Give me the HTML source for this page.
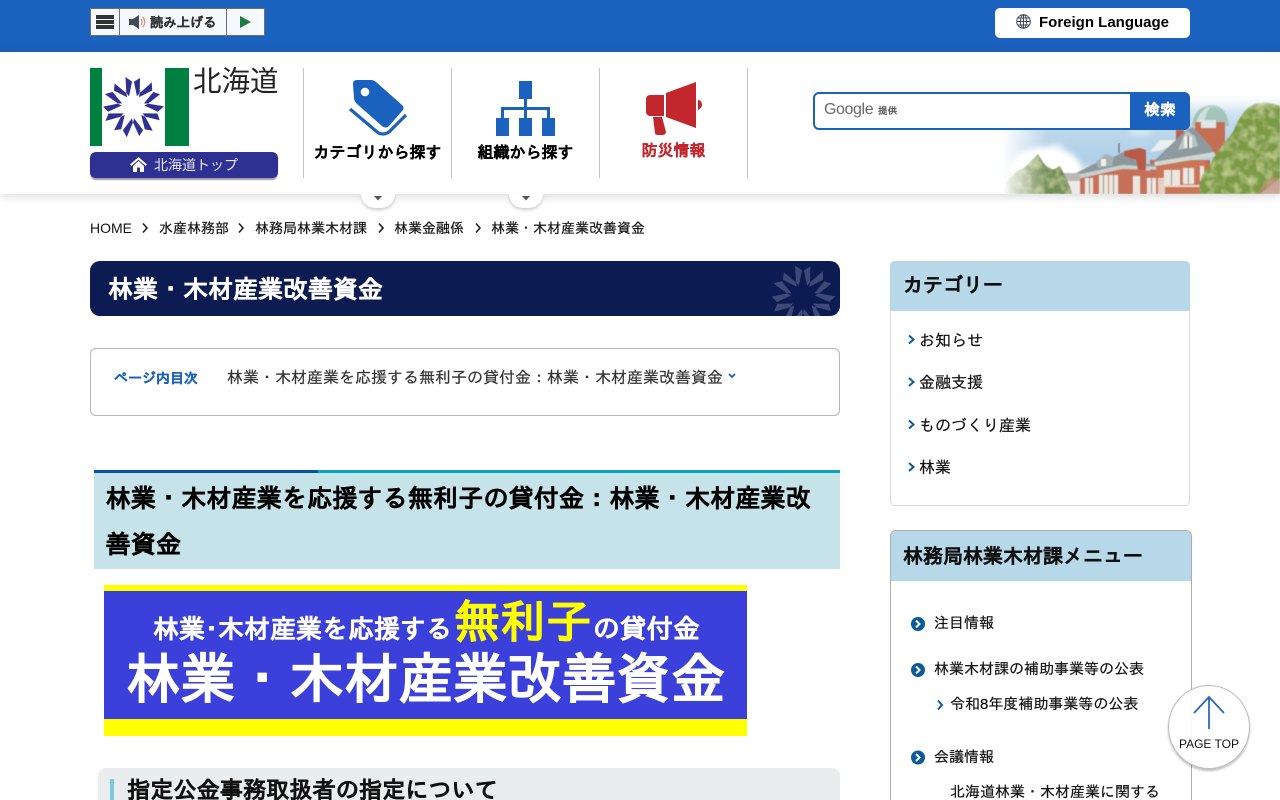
<!DOCTYPE html>
<html lang="ja">
<head>
<meta charset="utf-8">
<title>林業・木材産業改善資金</title>
<style>
html,body{margin:0;padding:0;width:1280px;height:800px;overflow:hidden;background:#fff}
body{position:relative;font-family:"Liberation Sans","IPAGothic",sans-serif;color:#111}
.a{position:absolute;white-space:nowrap}
.i{-webkit-text-stroke:.2px currentColor}
.n{font-family:"Liberation Sans","Noto Sans CJK JP",sans-serif}
svg{position:absolute;overflow:visible}
</style>
</head>
<body>
<svg width="0" height="0" style="left:0;top:0">
<defs>
<g id="arm"><path d="M-7.500,-30 L-.5,-25 L.5,-25 L7,-29 L6.700,-14 L0,-6 L-6.700,-14Z"/></g>
<g id="star"><use href="#arm" transform="rotate(0)"/><use href="#arm" transform="rotate(51.43)"/><use href="#arm" transform="rotate(102.86)"/><use href="#arm" transform="rotate(154.29)"/><use href="#arm" transform="rotate(205.71)"/><use href="#arm" transform="rotate(257.14)"/><use href="#arm" transform="rotate(308.57)"/></g>
<g id="tip"><path d="M-4.300,-9 L-1,-25 L-.3,-31 L.3,-31 L1,-25 L4.300,-9Z"/></g>
<g id="wstar"><use href="#tip" transform="rotate(0)"/><use href="#tip" transform="rotate(51.43)"/><use href="#tip" transform="rotate(102.86)"/><use href="#tip" transform="rotate(154.29)"/><use href="#tip" transform="rotate(205.71)"/><use href="#tip" transform="rotate(257.14)"/><use href="#tip" transform="rotate(308.57)"/><circle r="10"/></g>
<linearGradient id="sky" x1="0" y1="0" x2="0" y2="1"><stop offset="0" stop-color="#f4f8fb"/><stop offset=".3" stop-color="#bfd9ec"/><stop offset=".65" stop-color="#afd0e8"/><stop offset="1" stop-color="#e4eef5"/></linearGradient>
<linearGradient id="fade" x1="0" y1="0" x2="1" y2="0"><stop offset="0" stop-color="#fff"/><stop offset=".04" stop-color="#fff"/><stop offset=".2" stop-color="#fff" stop-opacity="0"/></linearGradient>
<linearGradient id="fade2" x1="0" y1="0" x2="0" y2="1"><stop offset="0" stop-color="#fff"/><stop offset=".16" stop-color="#fff" stop-opacity="0"/></linearGradient>
<filter id="leaf" x="0" y="0" width="100%" height="100%"><feTurbulence type="fractalNoise" baseFrequency=".12" numOctaves="2" seed="4"/><feColorMatrix values="0 0 0 0 .68  0 0 0 0 .74  0 0 0 0 .36  1.500 0 0 0 -.6"/><feComposite in2="SourceAlpha" operator="in" result="n"/><feMerge><feMergeNode in="SourceGraphic"/><feMergeNode in="n"/></feMerge></filter>
<filter id="soft"><feGaussianBlur stdDeviation=".5"/></filter>
<filter id="cl"><feGaussianBlur stdDeviation="3"/></filter>
</defs>
</svg>

<!-- top bar -->
<div class="a" style="left:0;top:0;width:1280px;height:52px;background:#1b61be"></div>
<div class="a" style="left:90px;top:8px;width:173px;height:26px;background:#f5f8fc;border:1px solid #6a6f78"></div>
<div class="a" style="left:119px;top:9px;width:1px;height:26px;background:#6a6f78"></div>
<div class="a" style="left:226px;top:9px;width:1px;height:26px;background:#6a6f78"></div>
<div class="a" style="left:96px;top:15px;width:18px;height:4px;background:#333"></div>
<div class="a" style="left:96px;top:20px;width:18px;height:4px;background:#333"></div>
<div class="a" style="left:96px;top:25px;width:18px;height:4px;background:#333"></div>
<svg style="left:129px;top:14px" width="20" height="16" viewBox="0 0 20 16"><path d="M0,5H4L10,1V15L4,11H0Z" fill="#444a58"/><path d="M12,5Q14,8 12,11M14,3Q17.500,8 14,13" fill="none" stroke="#ef8a5a" stroke-width="1.200"/></svg>
<div class="a i" style="left:150px;top:13px;line-height:20px;font-size:13.300px;font-weight:700;color:#333">読み上げる</div>
<svg style="left:240px;top:16px" width="13" height="13"><path d="M0,0L11,6L0,12Z" fill="#1e7d3c"/></svg>

<div class="a" style="left:995px;top:8px;width:195px;height:30px;background:#fff;border-radius:5px"></div>
<svg style="left:1016px;top:14px" width="15" height="15" viewBox="0 0 15 15" fill="none" stroke="#3f4a58" stroke-width="1"><circle cx="7.500" cy="7.500" r="6.800"/><ellipse cx="7.500" cy="7.500" rx="3" ry="6.800"/><path d="M.7,7.500H14.300M1.600,4H13.400M1.600,11H13.400M7.500,.7V14.300"/></svg>
<div class="a" style="left:1039px;top:14px;line-height:18px;font-size:15px;font-weight:700;color:#000">Foreign Language</div>

<!-- header -->
<div class="a" style="left:0;top:52px;width:1280px;height:142px;background:#fff;box-shadow:0 2px 10px rgba(0,0,0,.16)"></div>

<!-- photo -->
<svg style="left:990px;top:94px" width="290" height="100" viewBox="0 0 290 100">
<clipPath id="pc"><rect width="290" height="100"/></clipPath>
<g clip-path="url(#pc)">
<rect width="290" height="100" fill="url(#sky)"/>
<g filter="url(#cl)" fill="#fff"><ellipse cx="55" cy="75" rx="36" ry="22"/><ellipse cx="88" cy="84" rx="24" ry="9"/><ellipse cx="66" cy="52" rx="8" ry="2.500" opacity=".6"/><ellipse cx="150" cy="38" rx="12" ry="2" opacity=".7"/></g>
<g filter="url(#soft)">
<path d="M202,32C203,18 212,11 222,11C232,11 238,20 239,32Z" fill="#a5c3bb"/>
<path d="M206,30C208,20 214,14 220,13C216,20 214,26 214,32Z" fill="#cfe1dc"/>
<rect x="205" y="28" width="30" height="34" fill="#c46e52"/>
<rect x="211" y="26" width="15" height="8" fill="#dfe6e6"/>
<rect x="160" y="66" width="60" height="34" fill="#c56c50"/>
<path d="M172,56L192,46L170,46L160,58Z" fill="#eceff0"/>
<rect x="186" y="36" width="8" height="18" fill="#b9624a"/>
<path d="M88,81L130,73L170,78V100H88Z" fill="#c6705a"/>
<path d="M86,79L108,68L126,62L133,58L142,64L150,70L170,70L174,76L132,74L88,83Z" fill="#8c979c"/>
<path d="M86,81L132,71L174,73V76L132,75L87,85Z" fill="#c7d0cc"/>
<path d="M129,59V49" stroke="#60686c" stroke-width="1.200"/>
<path d="M106,68L116,60L124,64L122,72L108,74Z" fill="#a6afb1"/><rect x="111" y="65" width="5" height="7" fill="#eef0ee"/>
<path d="M134,57L150,54L156,56V76L148,76L146,66L134,62Z" fill="#b65c44"/>
<rect x="166" y="66" width="50" height="34" fill="#cb7558"/>
<path d="M165,66L196,36L203,33L222,54L224,60L168,70Z" fill="#8e99a0"/>
<path d="M164,68L224,58L226,62L165,72Z" fill="#d0d8d2"/>
<path d="M196,36L205,42L208,52L188,56Z" fill="#b8c3c5"/>
<rect x="194" y="42" width="8" height="12" fill="#eeeee8"/><rect x="197.500" y="42" width="1.500" height="12" fill="#555"/>
<g fill="#ebe6de">
<rect x="95" y="84" width="8" height="16"/><rect x="109" y="81" width="9" height="19"/><rect x="119" y="81" width="9" height="19"/><rect x="143" y="82" width="7" height="18"/><rect x="157" y="84" width="9" height="16"/><rect x="168" y="84" width="7" height="16" opacity=".8"/>
<rect x="174" y="76" width="16" height="15"/><rect x="193" y="74" width="11" height="16"/><rect x="210" y="72" width="4" height="16"/>
</g>
<g fill="#8a8684"><rect x="99" y="84" width="1" height="16"/><rect x="113" y="81" width="1" height="19"/><rect x="123" y="81" width="1" height="19"/><rect x="161" y="84" width="1" height="16"/><rect x="181" y="76" width="1" height="15"/><rect x="198" y="74" width="1" height="16"/></g>
<rect x="170" y="91" width="40" height="2" fill="#e8d8c8"/>
<rect x="66" y="86" width="24" height="14" fill="#ecebe9"/><rect x="66" y="79" width="24" height="8" fill="#bbb9b8"/>
<path d="M14,100C16,84 24,78 34,74C38,70 44,64 48,60C52,66 54,72 60,74C64,78 68,72 70,72C74,80 80,90 82,100Z" fill="#6f8c58" filter="url(#leaf)"/>
<path d="M210,100C208,90 211,82 216,76C222,70 222,64 228,58C232,50 238,46 244,36C250,22 256,12 268,9C276,8 284,9 290,12V84L270,100Z" fill="#7b9a44" filter="url(#leaf)"/>
<path d="M280,84H290V100H266Z" fill="#c08a72" opacity=".7"/>
</g>
<rect width="290" height="100" fill="url(#fade)"/>
<rect width="290" height="100" fill="url(#fade2)"/>
</g>
</svg>

<!-- logo -->
<div class="a" style="left:90px;top:68px;width:11.500px;height:78px;background:#008040"></div>
<div class="a" style="left:165px;top:68px;width:23.500px;height:78px;background:#008040"></div>
<svg style="left:133px;top:107px" width="1" height="1"><use href="#star" fill="#2e3192"/><use href="#wstar" fill="#fff"/></svg>
<div class="a n" style="left:193px;top:62px;line-height:40px;font-size:28.500px;color:#222">北海道</div>
<div class="a" style="left:90px;top:152px;width:188px;height:26px;background:#2e3192;border-radius:6px;box-shadow:0 2px 1px #9a9aa8"></div>
<svg style="left:130px;top:157px" width="17" height="15" viewBox="0 0 17 15"><path d="M8.500,0L17,7.500L15.600,8.900L8.500,2.700L1.400,8.900L0,7.500Z M3,9L8.500,4L14,9V15H10V10.500H7V15H3Z" fill="#fff"/></svg>
<div class="a n" style="left:154px;top:155px;line-height:20px;font-size:14px;color:#e8e8f4">北海道トップ</div>

<!-- dividers -->
<div class="a" style="left:303px;top:68px;width:1px;height:110px;background:#c2c2cc"></div>
<div class="a" style="left:451px;top:68px;width:1px;height:110px;background:#c2c2cc"></div>
<div class="a" style="left:599px;top:68px;width:1px;height:110px;background:#c2c2cc"></div>
<div class="a" style="left:747px;top:68px;width:1px;height:110px;background:#c2c2cc"></div>

<!-- nav icons -->
<svg style="left:349px;top:80px" width="58" height="57" viewBox="0 0 58 57"><path d="M4,4C4,1 6,0 8,0L22,0C24,0 26,1 27,2L53,25C55,27 55,29 53,31L40,46C38,48 35,48 33,46L8,24C6,22 5,20 5,18Z" fill="#1b61be"/><circle cx="16" cy="12" r="4.300" fill="#fff"/><path d="M1,29L27,51C31,55 37,55 41,51L57,35" fill="none" stroke="#1b61be" stroke-width="3.200"/></svg>
<svg style="left:496px;top:81px" width="59" height="55" viewBox="0 0 59 55" fill="#1b61be"><rect x="23" width="13" height="18"/><rect y="37" width="13" height="18"/><rect x="23" y="37" width="13" height="18"/><rect x="46" y="37" width="13" height="18"/><path d="M28,18H31V26H54V37H51V29H31V37H28V29H8V37H5V26H28Z"/></svg>
<svg style="left:646px;top:82px" width="57" height="54" viewBox="0 0 57 54" fill="#c1272d"><path d="M4,13H18V34H4C2,34 0,32 0,30V17C0,15 2,13 4,13Z"/><path d="M20,11L50,0V46L20,35Z"/><path d="M52,18C55,18 56,21 56,23C56,25 54,27 52,28Z"/><path d="M7,35H16L20,50C20,52 18,53 16,53H12C10,53 9,52 9,51Z"/></svg>
<div class="a i" style="left:304px;top:143px;width:147px;text-align:center;line-height:22px;font-size:16px;font-weight:700;color:#000">カテゴリから探す</div>
<div class="a i" style="left:452px;top:143px;width:147px;text-align:center;line-height:22px;font-size:16px;font-weight:700;color:#000">組織から探す</div>
<div class="a i" style="left:600px;top:141px;width:147px;text-align:center;line-height:22px;font-size:16px;font-weight:700;color:#c1272d">防災情報</div>

<!-- tabs -->
<div class="a" style="left:361px;top:194px;width:34px;height:14px;background:#fff;border-radius:0 0 17px 17px;box-shadow:0 2px 3px rgba(0,0,0,.2)"></div>
<div class="a" style="left:509px;top:194px;width:34px;height:14px;background:#fff;border-radius:0 0 17px 17px;box-shadow:0 2px 3px rgba(0,0,0,.2)"></div>
<svg style="left:374px;top:196px" width="8" height="5"><path d="M0,0H8L4,4.500Z" fill="#555"/></svg>
<svg style="left:522px;top:196px" width="8" height="5"><path d="M0,0H8L4,4.500Z" fill="#555"/></svg>

<!-- search -->
<div class="a" style="left:813px;top:92px;width:373px;height:34px;background:#fff;border:2px solid #1b61be;border-radius:6px"></div>
<div class="a" style="left:1130px;top:92px;width:60px;height:38px;background:#1b61be;border-radius:0 6px 6px 0"></div>
<div class="a i" style="left:1130px;top:93px;width:60px;line-height:36px;text-align:center;font-size:15.500px;font-weight:700;color:#fff">検索</div>
<div class="a" style="left:824px;top:100px;line-height:20px;font-size:16px;color:#6a6a6a;letter-spacing:-.4px">Google</div>
<div class="a" style="left:878px;top:103px;line-height:18px;font-size:9.500px;color:#555;font-weight:700">提供</div>

<!-- breadcrumb -->
<div class="a" style="left:90px;top:218px;line-height:20px;font-size:14px;color:#111">HOME</div>
<div class="a i" style="left:159px;top:218px;line-height:20px;font-size:14px;color:#111">水産林務部</div>
<div class="a i" style="left:255px;top:218px;line-height:20px;font-size:14px;color:#111">林務局林業木材課</div>
<div class="a i" style="left:394px;top:218px;line-height:20px;font-size:14px;color:#111">林業金融係</div>
<div class="a i" style="left:491px;top:218px;line-height:20px;font-size:14px;color:#111">林業・木材産業改善資金</div>
<svg style="left:0;top:0" width="1" height="1" fill="none" stroke="#222" stroke-width="1.600"><path d="M143,223.500L147,228L143,232.500M239,223.500L243,228L239,232.500M379,223.500L383,228L379,232.500M476,223.500L480,228L476,232.500"/></svg>

<!-- h1 -->
<div class="a" style="left:90px;top:261px;width:750px;height:55px;background:#0c1b52;border-radius:10px;overflow:hidden">
<svg style="left:713px;top:36px" width="1" height="1"><g transform="scale(1.050)"><use href="#star" fill="#3d4a78"/><use href="#wstar" fill="#0c1b52"/></g></svg>
</div>
<div class="a i" style="left:108px;top:271px;line-height:38px;font-size:25px;font-weight:700;color:#fff">林業・木材産業改善資金</div>

<!-- toc -->
<div class="a" style="left:90px;top:348px;width:748px;height:66px;border:1px solid #b8b8b8;border-radius:6px"></div>
<div class="a i" style="left:114px;top:368px;line-height:20px;font-size:14px;font-weight:700;color:#1b61be">ページ内目次</div>
<div class="a i" style="left:227px;top:368px;line-height:22px;font-size:16px;color:#333">林業・木材産業を応援する無利子の貸付金：林業・木材産業改善資金</div>
<svg style="left:728px;top:373px" width="8" height="6"><path d="M1,1L4,4L7,1" fill="none" stroke="#1b61be" stroke-width="1.800"/></svg>

<!-- h2 -->
<div class="a" style="left:94px;top:473px;width:746px;height:96px;background:#c6e3ea"></div>
<div class="a" style="left:94px;top:470px;width:224px;height:3px;background:#0055a5"></div>
<div class="a" style="left:318px;top:470px;width:522px;height:3px;background:#0ba2c4"></div>
<div class="a i" style="left:105.500px;top:476px;line-height:46px;font-size:25.200px;font-weight:700;color:#000;width:710px;white-space:normal">林業・木材産業を応援する無利子の貸付金：林業・木材産業改善資金</div>

<!-- banner -->
<div class="a" style="left:104px;top:585px;width:643px;height:151px;background:#ff0"></div>
<div class="a" style="left:104px;top:591px;width:643px;height:128px;background:#3b40da"></div>
<div class="a i" style="left:153px;top:612px;line-height:34px;font-size:26px;font-weight:700;color:#fff">林業･木材産業を応援する</div>
<div class="a i" style="left:454px;top:594px;line-height:56px;font-size:46px;font-weight:700;color:#ff0">無利子</div>
<div class="a i" style="left:593px;top:612px;line-height:34px;font-size:26.700px;font-weight:700;color:#fff">の貸付金</div>
<div class="a i" style="left:126px;top:645px;line-height:70px;font-size:54.500px;font-weight:700;color:#fff">林業・木材産業改善資金</div>

<!-- h3 -->
<div class="a" style="left:98px;top:768px;width:742px;height:40px;background:#e9eded;border-radius:8px 8px 0 0"></div>
<div class="a" style="left:110px;top:779px;width:4px;height:30px;background:#7cc7de"></div>
<div class="a i" style="left:127px;top:774px;line-height:32px;font-size:23.200px;font-weight:700;color:#111">指定公金事務取扱者の指定について</div>

<!-- sidebar 1 -->
<div class="a" style="left:890px;top:261px;width:298px;height:243px;border:1px solid #d8d8d8;border-radius:5px"></div>
<div class="a" style="left:890px;top:261px;width:300px;height:50px;background:#b6d8e8;border-radius:5px 5px 0 0"></div>
<div class="a i" style="left:903px;top:272px;line-height:28px;font-size:20px;font-weight:700;color:#111">カテゴリー</div>
<div class="a i" style="left:919px;top:331px;line-height:22px;font-size:16px">お知らせ</div>
<div class="a i" style="left:919px;top:373px;line-height:22px;font-size:16px">金融支援</div>
<div class="a i" style="left:919px;top:416px;line-height:22px;font-size:16px">ものづくり産業</div>
<div class="a i" style="left:919px;top:458px;line-height:22px;font-size:16px">林業</div>
<svg style="left:0;top:0" width="1" height="1" fill="none" stroke="#0a5a9c" stroke-width="2"><path d="M909,335.500L913.500,339.500L909,343.500M909,378L913.500,382L909,386M909,420.500L913.500,424.500L909,428.500M909,463L913.500,467L909,471"/></svg>

<!-- sidebar 2 -->
<div class="a" style="left:890px;top:530px;width:300px;height:300px;border:1px solid #aeaeae;border-radius:6px"></div>
<div class="a" style="left:891px;top:531px;width:300px;height:50px;background:#b6d8e8;border-radius:5px 5px 0 0"></div>
<div class="a i" style="left:903px;top:543px;line-height:28px;font-size:20px;font-weight:700;color:#111">林務局林業木材課メニュー</div>
<svg style="left:0;top:0" width="1" height="1">
<g fill="#0a5a9c"><circle cx="918" cy="624" r="7"/><circle cx="918" cy="670" r="7"/><circle cx="918" cy="757.500" r="7"/></g>
<path d="M916,620.500L919.500,624L916,627.500M916,666.500L919.500,670L916,673.500M916,754L919.500,757.500L916,761" fill="none" stroke="#fff" stroke-width="2"/>
<path d="M938,700.500L942,705L938,709.500" fill="none" stroke="#0a5a9c" stroke-width="2"/>
</svg>
<div class="a i" style="left:934px;top:613px;line-height:22px;font-size:15px">注目情報</div>
<div class="a i" style="left:934px;top:659px;line-height:22px;font-size:15px">林業木材課の補助事業等の公表</div>
<div class="a i" style="left:950px;top:694px;line-height:22px;font-size:15px">令和8年度補助事業等の公表</div>
<div class="a i" style="left:934px;top:747px;line-height:22px;font-size:15px">会議情報</div>
<div class="a i" style="left:950px;top:782px;line-height:22px;font-size:15px">北海道林業・木材産業に関する</div>

<!-- page top -->
<div class="a" style="left:1168px;top:685px;width:80px;height:82px;background:rgba(255,255,255,.93);border:1px solid #b8bcc4;border-radius:50%;box-shadow:0 2px 2px rgba(0,0,0,.25)"></div>
<svg style="left:1193px;top:696px" width="32" height="36" fill="none" stroke="#2a69c0" stroke-width="1.800"><path d="M16,1V33M1,17L16,1L31,17"/></svg>
<div class="a" style="left:1168px;top:736px;width:82px;text-align:center;line-height:16px;font-size:12px;color:#111">PAGE TOP</div>
</body>
</html>
